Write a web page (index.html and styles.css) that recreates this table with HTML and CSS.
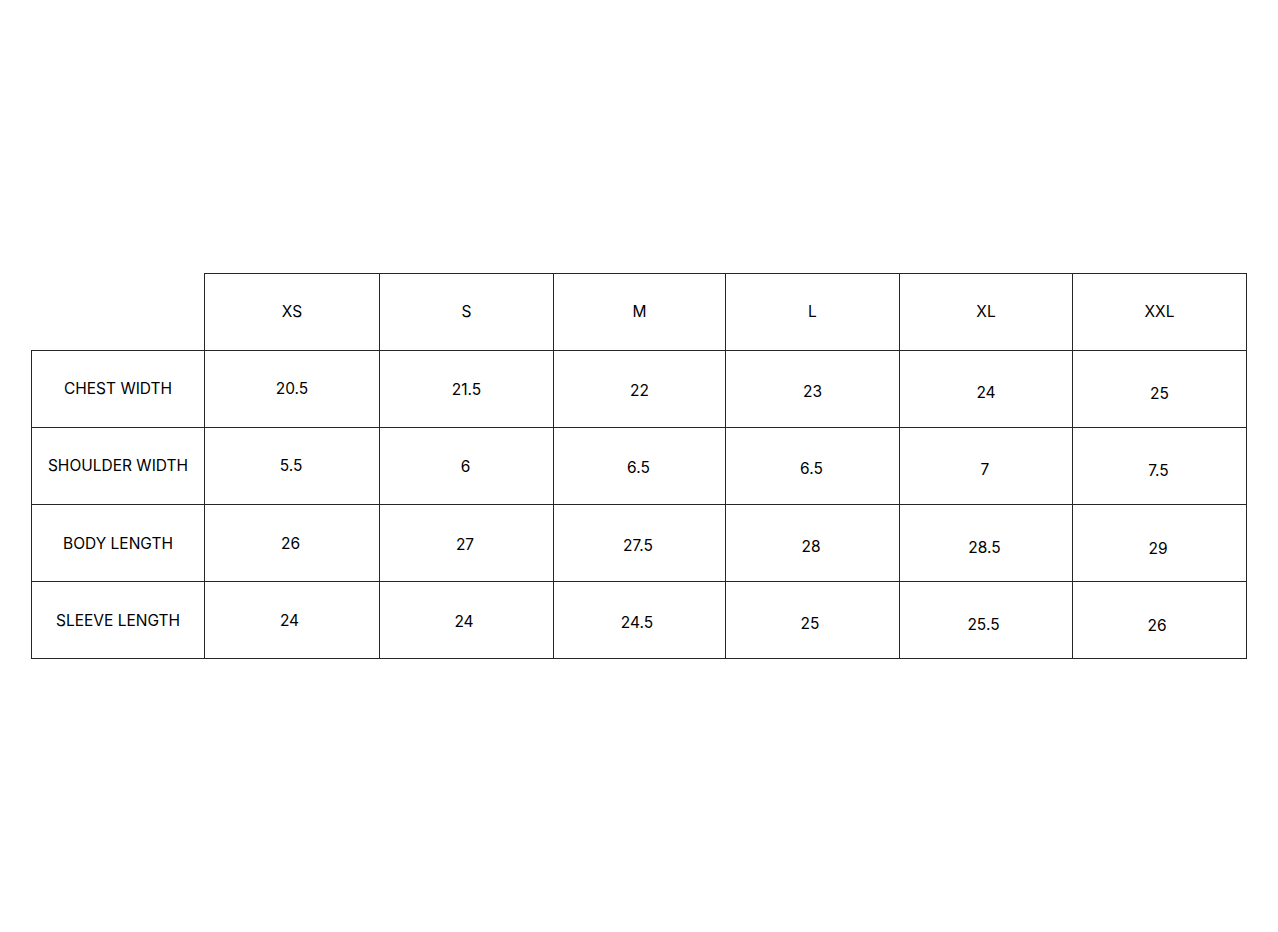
FILE: index.html
```html
<!DOCTYPE html>
<html>
<head>
<meta charset="utf-8">
<link rel="stylesheet" href="styles.css">
</head>
<body>
<main class="page">
  <table class="size-chart">
    <colgroup>
      <col class="c-label"><col class="c1"><col class="c2"><col class="c3"><col class="c4"><col class="c5"><col class="c6">
    </colgroup>
    <thead>
      <tr>
        <th class="corner"></th>
        <th>XS</th><th>S</th><th>M</th><th>L</th><th>XL</th><th>XXL</th>
      </tr>
    </thead>
    <tbody>
      <tr class="r1">
        <th class="label">CHEST WIDTH</th>
        <td>20.5</td><td>21.5</td><td>22</td><td>23</td><td>24</td><td>25</td>
      </tr>
      <tr class="r2">
        <th class="label">SHOULDER WIDTH</th>
        <td>5.5</td><td>6</td><td>6.5</td><td>6.5</td><td>7</td><td>7.5</td>
      </tr>
      <tr class="r3">
        <th class="label">BODY LENGTH</th>
        <td>26</td><td>27</td><td>27.5</td><td>28</td><td>28.5</td><td>29</td>
      </tr>
      <tr class="r4">
        <th class="label">SLEEVE LENGTH</th>
        <td>24</td><td>24</td><td>24.5</td><td>25</td><td>25.5</td><td>26</td>
      </tr>
    </tbody>
  </table>
</main>
</body>
</html>
```
FILE: styles.css
```css
html, body {
  margin: 0;
  padding: 0;
  background: #ffffff;
}

.page {
  padding: 273px 0 0 31px;
}

.size-chart {
  border-collapse: collapse;
  table-layout: fixed;
  width: 1216px;
  font-family: Inter, "Liberation Sans", sans-serif;
  font-size: 15.5px;
  font-weight: 400;
  color: #000;
}

.c-label { width: 173px; }
.c1 { width: 175px; }
.c2 { width: 174px; }
.c3 { width: 172px; }
.c4 { width: 174px; }
.c5 { width: 173px; }
.c6 { width: 174px; }

.size-chart th,
.size-chart td {
  border: 1px solid #262626;
  height: 77px;
  padding: 0 0 2px 0;
  text-align: center;
  vertical-align: middle;
  font-weight: 400;
  box-sizing: border-box;
}

.size-chart th.corner {
  border: none;
  border-right: 1px solid #262626;
  border-bottom: 1px solid #262626;
}

.size-chart .r3 th,
.size-chart .r3 td,
.size-chart .r4 th,
.size-chart .r4 td { padding-bottom: 0; }

/* slight drift of the values, as in the original chart */
.size-chart tbody td:nth-child(3) { padding-top: 2px; }
.size-chart tbody td:nth-child(4) { padding-top: 4px; }
.size-chart tbody td:nth-child(5) { padding-top: 6px; }
.size-chart tbody td:nth-child(6) { padding-top: 8px; }
.size-chart tbody td:nth-child(7) { padding-top: 10px; }

.size-chart .r2 td { padding-right: 2px; }
.size-chart .r3 td { padding-right: 3px; }
.size-chart .r4 td { padding-right: 5px; }
```
